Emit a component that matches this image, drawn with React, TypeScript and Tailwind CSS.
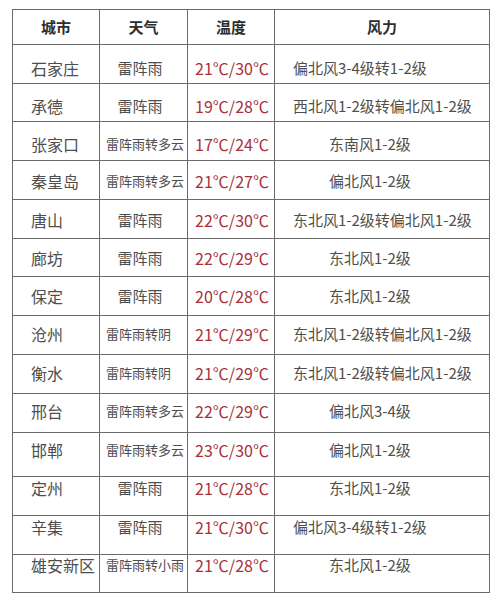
import React from "react";

type Row = {
  city: string;
  weather: string;
  small: boolean;
  temp: string;
  wind: string;
  long: boolean;
  h: string;
  pt: string;
};

const rows: Row[] = [
  { city: "石家庄", weather: "雷阵雨", small: false, temp: "21℃/30℃", wind: "偏北风3-4级转1-2级", long: true, h: "h-[39px]", pt: "pt-[13px]" },
  { city: "承德", weather: "雷阵雨", small: false, temp: "19℃/28℃", wind: "西北风1-2级转偏北风1-2级", long: true, h: "h-[38px]", pt: "pt-[12px]" },
  { city: "张家口", weather: "雷阵雨转多云", small: true, temp: "17℃/24℃", wind: "东南风1-2级", long: false, h: "h-[39px]", pt: "pt-[12px]" },
  { city: "秦皇岛", weather: "雷阵雨转多云", small: true, temp: "21℃/27℃", wind: "偏北风1-2级", long: false, h: "h-[39px]", pt: "pt-[10px]" },
  { city: "唐山", weather: "雷阵雨", small: false, temp: "22℃/30℃", wind: "东北风1-2级转偏北风1-2级", long: true, h: "h-[39px]", pt: "pt-[10px]" },
  { city: "廊坊", weather: "雷阵雨", small: false, temp: "22℃/29℃", wind: "东北风1-2级", long: false, h: "h-[38px]", pt: "pt-[9px]" },
  { city: "保定", weather: "雷阵雨", small: false, temp: "20℃/28℃", wind: "东北风1-2级", long: false, h: "h-[39px]", pt: "pt-[9px]" },
  { city: "沧州", weather: "雷阵雨转阴", small: true, temp: "21℃/29℃", wind: "东北风1-2级转偏北风1-2级", long: true, h: "h-[39px]", pt: "pt-[8px]" },
  { city: "衡水", weather: "雷阵雨转阴", small: true, temp: "21℃/29℃", wind: "东北风1-2级转偏北风1-2级", long: true, h: "h-[39px]", pt: "pt-[8px]" },
  { city: "邢台", weather: "雷阵雨转多云", small: true, temp: "22℃/29℃", wind: "偏北风3-4级", long: false, h: "h-[39px]", pt: "pt-[7px]" },
  { city: "邯郸", weather: "雷阵雨转多云", small: true, temp: "23℃/30℃", wind: "偏北风1-2级", long: false, h: "h-[44px]", pt: "pt-[7px]" },
  { city: "定州", weather: "雷阵雨", small: false, temp: "21℃/28℃", wind: "东北风1-2级", long: false, h: "h-[39px]", pt: "pt-[1px]" },
  { city: "辛集", weather: "雷阵雨", small: false, temp: "21℃/30℃", wind: "偏北风3-4级转1-2级", long: true, h: "h-[39px]", pt: "pt-[1px]" },
  { city: "雄安新区", weather: "雷阵雨转小雨", small: true, temp: "21℃/28℃", wind: "东北风1-2级", long: false, h: "h-[38px]", pt: "pt-[0px]" },
];

const font = { fontFamily: '"Noto Sans CJK SC", "Noto Sans", sans-serif' };

export default function App() {
  return (
    <div className="w-[500px] h-[610px] bg-white pt-[9px] pl-[12px]" style={font}>
      <div className="w-[478px] border-t border-l border-[#6a6a6a]">
        <div className="grid grid-cols-[87px_88px_87px_215px] h-[35px] border-b border-[#6a6a6a] text-[15px] font-bold text-[#2e2e2e] leading-[20px]">
          <div className="border-r border-[#6a6a6a] flex items-center justify-center">城市</div>
          <div className="border-r border-[#6a6a6a] flex items-center justify-center">天气</div>
          <div className="border-r border-[#6a6a6a] flex items-center justify-center">温度</div>
          <div className="border-r border-[#6a6a6a] flex items-center justify-center">风力</div>
        </div>
        {rows.map((r) => (
          <div
            key={r.city}
            className={`grid grid-cols-[87px_88px_87px_215px] border-b border-[#6a6a6a] text-[#4e4e4e] leading-[20px] ${r.h}`}
          >
            <div className={`border-r border-[#6a6a6a] pl-[18px] text-[16px] whitespace-nowrap ${r.pt}`}>{r.city}</div>
            <div
              className={`border-r border-[#6a6a6a] whitespace-nowrap ${r.pt} ${r.small ? "text-[13px] pl-[6px]" : "text-[15px] text-center pr-[7px]"}`}
            >
              {r.weather}
            </div>
            <div className={`border-r border-[#6a6a6a] text-center pl-[2px] text-[16px] text-[#a8323a] whitespace-nowrap ${r.pt}`}>
              {r.temp}
            </div>
            <div
              className={`border-r border-[#6a6a6a] text-[15px] whitespace-nowrap ${r.pt} ${r.long ? "pl-[18px]" : "pl-[54px]"}`}
            >
              {r.wind}
            </div>
          </div>
        ))}
      </div>
    </div>
  );
}
